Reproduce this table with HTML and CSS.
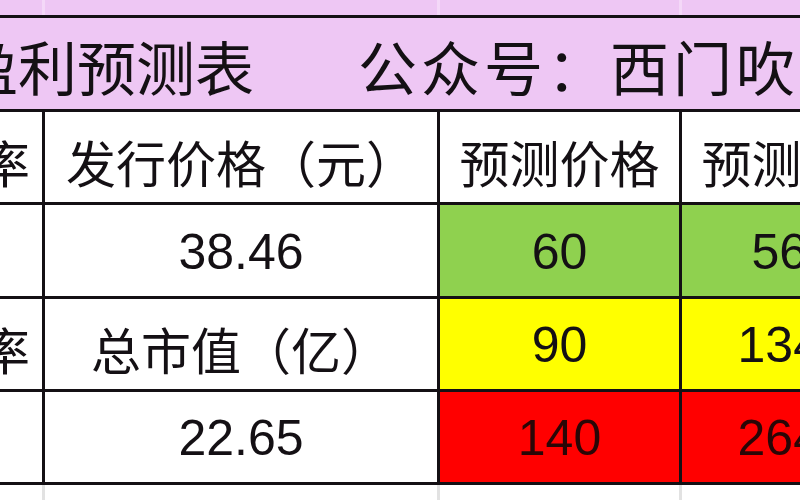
FILE: index.html
```html
<!DOCTYPE html>
<html lang="zh-CN">
<head>
<meta charset="utf-8">
<title>盈利预测表</title>
<link rel="stylesheet" href="styles.css">
</head>
<body>
<div class="sheet">
  <div class="strip strip-top">
    <div></div><div></div><div></div><div></div><div></div>
  </div>
  <div class="grid">
    <div class="cell title">
      <span class="title-main">新股盈利预测表</span>
      <span class="title-sub">公众号：西门吹雪</span>
    </div>

    <div class="cell label left">中签率</div>
    <div class="cell label">发行价格（元）</div>
    <div class="cell label">预测价格</div>
    <div class="cell label">预测涨幅</div>
    <div class="cell label">预测收益</div>

    <div class="cell"></div>
    <div class="cell num">38.46</div>
    <div class="cell num green">60</div>
    <div class="cell num green">56%</div>
    <div class="cell num green"></div>

    <div class="cell label left">发行市盈率</div>
    <div class="cell label">总市值（亿）</div>
    <div class="cell num yellow">90</div>
    <div class="cell num yellow">134%</div>
    <div class="cell num yellow"></div>

    <div class="cell"></div>
    <div class="cell num">22.65</div>
    <div class="cell num red">140</div>
    <div class="cell num red">264%</div>
    <div class="cell num red"></div>
  </div>
  <div class="strip strip-bottom">
    <div></div><div></div><div></div><div></div><div></div>
  </div>
</div>
</body>
</html>
```

FILE: styles.css
```css
html, body {
  margin: 0;
  padding: 0;
  background: #ffffff;
}

body {
  width: 800px;
  height: 500px;
  overflow: hidden;
  font-family: "Noto Sans CJK SC", "Liberation Sans", sans-serif;
  color: #141014;
}

.sheet {
  margin-left: -200px;
  width: 1200px;
}

.strip {
  display: grid;
  grid-template-columns: 242px 392px 239px 239px 239px;
  column-gap: 3px;
}

.strip-top {
  height: 15px;
  background: #f4d8f8;
}

.strip-top > div {
  background: #eec7f4;
}

.strip-bottom {
  height: 20px;
  background: #e2e2e2;
}

.strip-bottom > div {
  background: #ffffff;
}

.grid {
  display: grid;
  grid-template-columns: 242px 392px 239px 239px 239px;
  grid-template-rows: 91px 90px 91px 90px 90px;
  gap: 3px;
  padding: 3px 0;
  background: #141014;
}

.cell {
  background: #ffffff;
  display: flex;
  align-items: center;
  justify-content: center;
  line-height: 1;
  white-space: nowrap;
  overflow: hidden;
}

.title {
  grid-column: 1 / -1;
  background: #eec7f4;
  justify-content: flex-start;
  padding-left: 41px;
  gap: 104px;
  font-size: 59px;
  padding-top: 4px;
}

.title-sub {
  letter-spacing: 4px;
}

.label {
  font-size: 50px;
  padding-top: 8px;
}

.left {
  justify-content: flex-end;
  padding-right: 12px;
}

.num {
  font-family: "Liberation Sans", Arial, sans-serif;
  font-size: 50px;
  padding-top: 2px;
}

.green {
  background: #8fd14f;
}

.yellow {
  background: #ffff00;
}

.red {
  background: #ff0000;
  color: #2a0606;
}
```
